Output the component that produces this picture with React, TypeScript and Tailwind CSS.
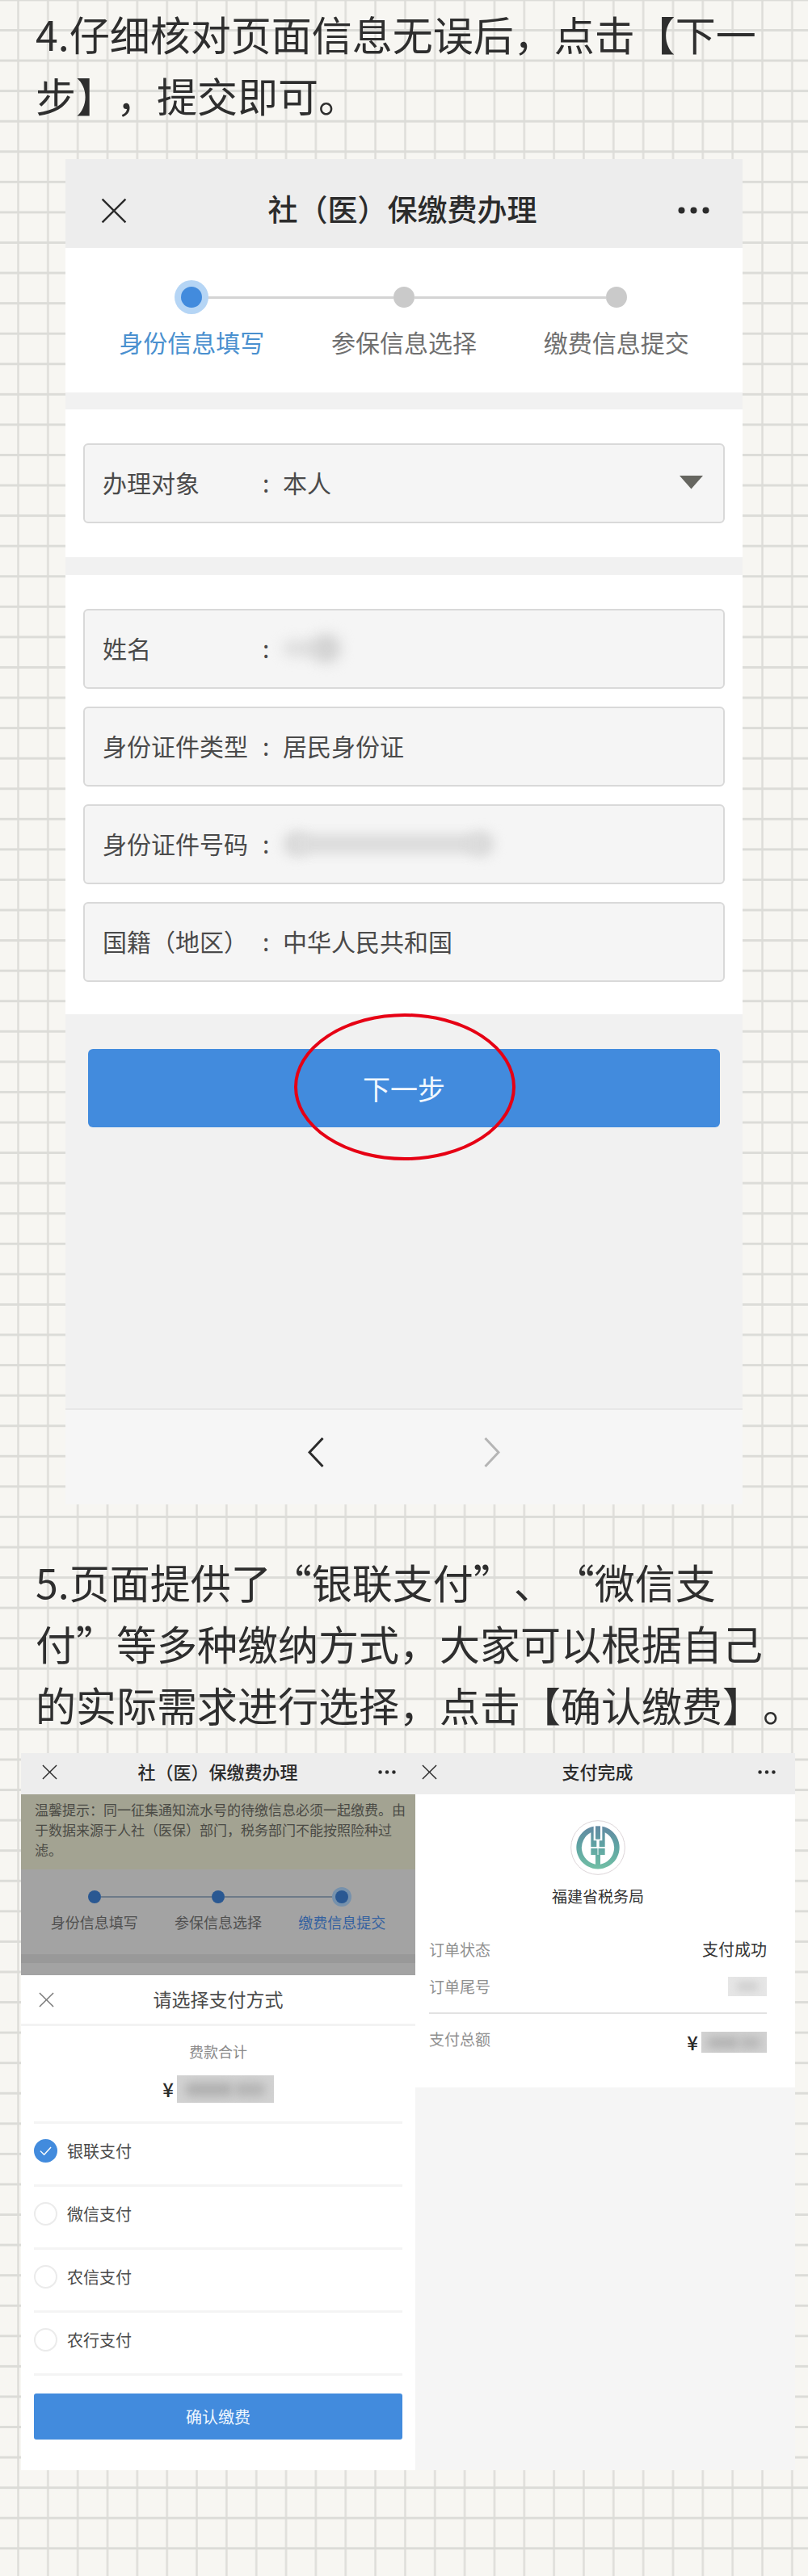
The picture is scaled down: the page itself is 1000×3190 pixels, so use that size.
import { useState } from "react";

const STEPS = ["身份信息填写", "参保信息选择", "缴费信息提交"];

const PAY_METHODS = [
  { id: "unionpay", label: "银联支付" },
  { id: "wechat", label: "微信支付" },
  { id: "rural-credit", label: "农信支付" },
  { id: "abc", label: "农行支付" },
];

function CloseIcon({ className }: { className: string }) {
  return (
    <svg viewBox="0 0 20 20" className={className} fill="none" stroke="currentColor" strokeWidth="1.5" aria-hidden="true">
      <path d="M1 1 19 19M19 1 1 19" />
    </svg>
  );
}

function MoreIcon({ className }: { className: string }) {
  return (
    <svg viewBox="0 0 39 9" className={className} fill="currentColor" aria-hidden="true">
      <circle cx="4.5" cy="4.5" r="4" />
      <circle cx="19.5" cy="4.5" r="4" />
      <circle cx="34.5" cy="4.5" r="4" />
    </svg>
  );
}

/* Squared notebook paper behind everything */
function Paper() {
  return (
    <svg className="absolute inset-0 -z-10 h-full w-full" aria-hidden="true">
      <defs>
        <pattern id="squares" x="21" y="36" width="36.84" height="37.57" patternUnits="userSpaceOnUse">
          <path d="M1.5 0V37.57" stroke="#deddd9" strokeWidth="2.5" />
          <path d="M0 1.5H36.84" stroke="#dcdcd8" strokeWidth="3" />
        </pattern>
      </defs>
      <rect width="100%" height="100%" fill="url(#squares)" />
    </svg>
  );
}

function BankLogo() {
  return (
    <svg viewBox="0 0 204 204" className="size-[68px]" aria-hidden="true">
      <defs>
        <linearGradient id="logo" x1="0" y1="22" x2="0" y2="182" gradientUnits="userSpaceOnUse">
          <stop offset="0" stopColor="#6389a2" />
          <stop offset="0.45" stopColor="#5fa3a3" />
          <stop offset="1" stopColor="#72bfa5" />
        </linearGradient>
      </defs>
      <circle cx="102" cy="102" r="100" fill="#fff" stroke="#dcd5d8" strokeWidth="3" />
      <g fill="url(#logo)">
        <path d="M86 23A80 80 0 1 0 118 23V76H107V100H128V46A63 63 0 0 1 111 164V129H128V104H76V129H93V164A63 63 0 0 1 76 46V100H97V76H86Z" />
        <path d="M93 22H111V71H93Z" />
      </g>
      <path d="M102 74V129M74 102H130" stroke="#fff" strokeWidth="3" />
    </svg>
  );
}

function SmallBar({ title, className }: { title: string; className: string }) {
  return (
    <header className={`flex h-[51px] items-center bg-[#ededed] pr-6 pb-1 text-[#2b2b2b] ${className}`}>
      <button type="button" aria-label="关闭">
        <CloseIcon className="size-[19px]" />
      </button>
      <h2 className="flex-1 pb-1 text-center text-[22px] leading-none font-medium">{title}</h2>
      <button type="button" aria-label="更多">
        <MoreIcon className="w-[22px]" />
      </button>
    </header>
  );
}

function Steps() {
  return (
    <ol className="grid h-[179px] grid-cols-3 bg-white px-[25px] pt-[48px]">
      {STEPS.map((step, i) => (
        <li key={step} className="flex flex-col items-center">
          <div className="flex w-full items-center">
            <span className={i === 0 ? "h-[3px] flex-1" : "h-[3px] flex-1 bg-[#d4d4d4]"} />
            <span
              className={
                i === 0
                  ? "relative z-10 size-[26px] rounded-full bg-[#428bdd] ring-8 ring-[#b5d5f5]"
                  : "size-[26px] rounded-full bg-[#cacaca]"
              }
            />
            <span className={i === 2 ? "h-[3px] flex-1" : "h-[3px] flex-1 bg-[#d4d4d4]"} />
          </div>
          <span
            className={
              i === 0
                ? "mt-[26px] text-[30px] leading-[32px] text-[#4a90cf]"
                : "mt-[26px] text-[30px] leading-[32px] text-[#6f6f6f]"
            }
          >
            {step}
          </span>
        </li>
      ))}
    </ol>
  );
}

function DimmedSteps() {
  return (
    <ol className="grid h-[105px] grid-cols-3 bg-[#a3a3a3] px-[14px] pt-[26px]">
      {STEPS.map((step, i) => (
        <li key={step} className="flex flex-col items-center">
          <div className="flex w-full items-center">
            <span className={i === 0 ? "h-[2px] flex-1" : "h-[2px] flex-1 bg-[#6d7a88]"} />
            <span
              className={
                i === 2
                  ? "relative z-10 size-4 rounded-full bg-[#2a5892] ring-4 ring-[#7691ac]"
                  : "size-4 rounded-full bg-[#2a5892]"
              }
            />
            <span className={i === 2 ? "h-[2px] flex-1" : "h-[2px] flex-1 bg-[#6d7a88]"} />
          </div>
          <span
            className={
              i === 2
                ? "mt-[13px] text-[18px] leading-[20px] text-[#3461a0]"
                : "mt-[13px] text-[18px] leading-[20px] text-[#505050]"
            }
          >
            {step}
          </span>
        </li>
      ))}
    </ol>
  );
}

type FieldProps = { id: string; label: string; children: React.ReactNode };

function Field({ id, label, children }: FieldProps) {
  return (
    <div className="flex h-[99px] items-center rounded-[6px] border-2 border-[#d9d9d9] bg-[#f5f5f5] px-[22px] pb-[2px] text-[30px] text-[#4a4a4a]">
      <label htmlFor={id} className="w-[198px] shrink-0">
        {label}
      </label>
      <span className="w-[25px] shrink-0">:</span>
      {children}
    </div>
  );
}

/* Smudged value, used where private data is hidden */
function Mask({ className }: { className: string }) {
  return (
    <span className={`flex items-center justify-center overflow-hidden bg-[#d2d2d2] ${className}`}>
      <span className="h-1/2 w-1/2 rounded-full bg-[#b0b0b0] blur-[6px]" />
      <span className="h-1/2 w-1/3 rounded-full bg-[#b5b5b5] blur-[6px]" />
    </span>
  );
}

function IdentityForm() {
  return (
    <section className="mx-[81px] mt-[42px] bg-[#f1f1f1]">
      <header className="flex h-[110px] items-center bg-[#ededed] pt-[17px] pr-[41px] pl-[44px] text-[#2b2b2b]">
        <button type="button" aria-label="关闭">
          <CloseIcon className="size-8" />
        </button>
        <h2 className="flex-1 pb-1 text-center text-[37px] leading-none font-medium">社（医）保缴费办理</h2>
        <button type="button" aria-label="更多">
          <MoreIcon className="w-[39px]" />
        </button>
      </header>
      <Steps />

      <form onSubmit={(e) => e.preventDefault()}>
        <div className="mt-[21px] bg-white px-[22px] pt-[42px] pb-[42px]">
          <Field id="target" label="办理对象">
            <select id="target" className="h-full min-w-0 flex-1 appearance-none bg-transparent outline-none">
              <option>本人</option>
            </select>
            <svg viewBox="0 0 30 17" className="mr-[3px] w-[29px]" fill="#666660" aria-hidden="true">
              <path d="M0 0H30L15 17Z" />
            </svg>
          </Field>
        </div>

        <div className="mt-[22px] flex flex-col gap-[22px] bg-white px-[22px] pt-[42px] pb-10">
          <Field id="name" label="姓名">
            <output id="name" className="flex items-center">
              <span className="h-5 w-12 rounded-full bg-[#dedede] blur-[8px]" />
              <span className="-ml-3 size-9 rounded-full bg-[#d3d3d3] blur-[8px]" />
            </output>
          </Field>
          <Field id="id-type" label="身份证件类型">
            <input id="id-type" readOnly defaultValue="居民身份证" className="min-w-0 flex-1 outline-none" />
          </Field>
          <Field id="id-number" label="身份证件号码">
            <output id="id-number" className="flex items-center">
              <span className="size-8 rounded-full bg-[#dadada] blur-[7px]" />
              <span className="-mx-3 h-6 w-[222px] bg-[#dcdcdc] blur-[7px]" />
              <span className="size-8 rounded-full bg-[#dadada] blur-[7px]" />
            </output>
          </Field>
          <Field id="nation" label="国籍（地区）">
            <input id="nation" readOnly defaultValue="中华人民共和国" className="min-w-0 flex-1 outline-none" />
          </Field>
        </div>

        <div className="relative px-7 pt-[43px] pb-[348px]">
          <button type="submit" className="h-[97px] w-full rounded-[6px] bg-[#428bdd] text-[34px] text-[#f1f8ff]">
            下一步
          </button>
          {/* Red pen circle round the button */}
          <svg
            viewBox="0 0 276 182"
            className="pointer-events-none absolute -top-px left-1/2 w-[276px] -translate-x-1/2"
            fill="none"
            aria-hidden="true"
          >
            <ellipse cx="139" cy="91" rx="135" ry="89" stroke="#e60014" strokeWidth="4" />
          </svg>
        </div>
      </form>

      <nav className="flex h-[119px] items-center justify-center gap-[198px] border-t-2 border-[#e7e7e7] bg-[#f6f6f6] pb-3">
        <button type="button" aria-label="后退" className="text-[#2b2b2b]">
          <svg viewBox="0 0 20 37" className="w-5" fill="none" stroke="currentColor" strokeWidth="3">
            <path d="M18.5 1 2 18.5 18.5 36" />
          </svg>
        </button>
        <button type="button" aria-label="前进" className="text-[#b5b5b5]">
          <svg viewBox="0 0 20 37" className="w-5" fill="none" stroke="currentColor" strokeWidth="3">
            <path d="M1.5 1 18 18.5 1.5 36" />
          </svg>
        </button>
      </nav>
    </section>
  );
}

function PaymentSheet() {
  const [method, setMethod] = useState("unionpay");

  return (
    <section className="bg-white">
      <SmallBar title="社（医）保缴费办理" className="pl-[26px]" />
      <p className="bg-[#a3a392] pt-[6px] pb-[12px] pl-[17px] text-[17px] leading-[25px] whitespace-nowrap text-[#4a4a45]">
        温馨提示：同一征集通知流水号的待缴信息必须一起缴费。由
        <br />
        于数据来源于人社（医保）部门，税务部门不能按照险种过
        <br />
        滤。
      </p>
      <DimmedSteps />
      <div className="h-[26px] border-t-[11px] border-[#999] bg-[#a3a3a3]" />

      <div className="flex h-[63px] items-center border-b-[3px] border-[#f3f3f3] px-[22px] text-[#4a4a4a]">
        <button type="button" aria-label="关闭" className="text-[#777]">
          <CloseIcon className="size-[19px]" />
        </button>
        <h3 className="flex-1 pr-[19px] pb-[2px] text-center text-[23px] leading-none">请选择支付方式</h3>
      </div>

      <div className="px-4">
        <div className="flex h-[121px] flex-col items-center border-b-[3px] border-[#f4f4f4] pt-[21px]">
          <span className="text-[18px] leading-[20px] text-[#8a8a8a]">费款合计</span>
          <div className="mt-5 flex items-center gap-1 text-[24px] leading-none font-medium text-[#2b2b2b]">
            <span>¥</span>
            <Mask className="h-[34px] w-[120px]" />
          </div>
        </div>

        {PAY_METHODS.map((m) => (
          <label
            key={m.id}
            className="flex h-[78px] items-center gap-3 border-b-[3px] border-[#f4f4f4] pb-2 text-[20px] text-[#4a4a4a]"
          >
            <span className="grid size-[29px] place-items-center">
              <input
                type="radio"
                name="pay-method"
                value={m.id}
                checked={method === m.id}
                onChange={() => setMethod(m.id)}
                className="col-start-1 row-start-1 size-[29px] appearance-none rounded-full border-2 border-[#ebebeb] bg-white checked:border-[#428bdd] checked:bg-[#428bdd]"
              />
              {method === m.id && (
                <svg
                  viewBox="0 0 16 12"
                  className="pointer-events-none col-start-1 row-start-1 w-[15px]"
                  fill="none"
                  stroke="#fff"
                  strokeWidth="1.5"
                  aria-hidden="true"
                >
                  <path d="M1 6 6 11 15 1" />
                </svg>
              )}
            </span>
            {m.label}
          </label>
        ))}

        <button type="button" className="mt-[22px] mb-[38px] h-[57px] w-full rounded-[3px] bg-[#428bdd] text-[20px] text-[#f1f8ff]">
          确认缴费
        </button>
      </div>
    </section>
  );
}

function Receipt() {
  return (
    <section className="bg-[#f5f5f5]">
      <SmallBar title="支付完成" className="pl-2" />
      <div className="flex flex-col items-center bg-white pt-[32px] pr-[35px] pb-[43px] pl-[17px]">
        <BankLogo />
        <h3 className="mt-4 text-[19px] leading-[20px] text-[#333]">福建省税务局</h3>
        <dl className="mt-[43px] w-full text-[19px] leading-[26px] text-[#909090]">
          <div className="flex items-center justify-between">
            <dt>订单状态</dt>
            <dd className="text-[20px] text-[#333]">支付成功</dd>
          </div>
          <div className="mt-5 flex items-center justify-between border-b-2 border-[#e2e2e2] pb-[19px]">
            <dt>订单尾号</dt>
            <dd>
              <span className="flex h-6 w-12 items-center justify-center overflow-hidden bg-[#e6e6e6]">
                <span className="h-3 w-7 rounded-full bg-[#d0d0d0] blur-[5px]" />
              </span>
            </dd>
          </div>
          <div className="mt-[18px] flex items-start justify-between">
            <dt>支付总额</dt>
            <dd className="flex items-center gap-1 pt-1 text-[24px] font-medium text-[#2b2b2b]">
              ¥
              <Mask className="h-[26px] w-[81px]" />
            </dd>
          </div>
        </dl>
      </div>
    </section>
  );
}

export default function App() {
  return (
    <main className="relative isolate overflow-hidden bg-[#f7f6f2] pb-[131px] font-['Noto_Sans_CJK_SC',sans-serif] [text-spacing-trim:space-all]">
      <Paper />
      <p className="pt-[3px] pl-11 text-[50px] leading-[76px] whitespace-nowrap text-[#2e2e2e]">
        4.仔细核对页面信息无误后，点击【下一
        <br />
        步】，提交即可。
      </p>

      <IdentityForm />

      <p className="mt-[57px] pl-11 text-[50px] leading-[76px] whitespace-nowrap text-[#2e2e2e]">
        5.页面提供了“银联支付”、“微信支
        <br />
        付”等多种缴纳方式，大家可以根据自己
        <br />
        的实际需求进行选择，点击【确认缴费】。
      </p>

      <div className="mt-[23px] mr-4 ml-[26px] grid grid-cols-[488fr_470fr]">
        <PaymentSheet />
        <Receipt />
      </div>
    </main>
  );
}
